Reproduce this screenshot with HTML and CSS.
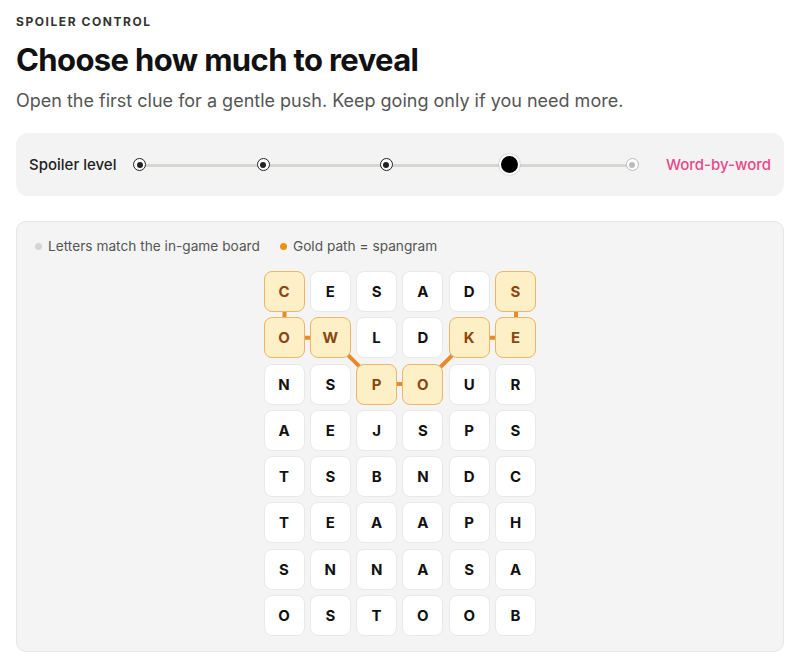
FILE: index.html
```html
<!DOCTYPE html>
<html lang="en">
<head>
  <meta charset="UTF-8">
  <meta name="viewport" content="width=device-width, initial-scale=1">
  <title>Spoiler Control</title>
  <link rel="stylesheet" href="styles.css">
</head>
<body>
  <div class="page">
    <div class="eyebrow">SPOILER CONTROL</div>
    <h1>Choose how much to reveal</h1>
    <p class="lead">Open the first clue for a gentle push. Keep going only if you need more.</p>

    <div class="level-panel">
      <span class="level-label">Spoiler level</span>
      <div class="slider">
        <span class="stop"></span>
        <span class="stop"></span>
        <span class="stop"></span>
        <span class="stop active"></span>
        <span class="stop muted"></span>
      </div>
      <span class="level-value">Word-by-word</span>
    </div>

    <div class="board-panel">
      <div class="legend">
        <span class="legend-item"><i class="dot grey"></i>Letters match the in-game board</span>
        <span class="legend-item"><i class="dot gold"></i>Gold path = spangram</span>
      </div>

      <div class="board">
        <svg class="path-lines" width="274" height="366" viewBox="0 0 274 366">
          <polyline points="20.5,20.5 20.5,66.8 66.8,66.8 113.1,113.1 159.4,113.1 205.7,66.8 252,66.8 252,20.5" />
        </svg>
        <div class="grid">
          <div class="cell gold">C</div><div class="cell">E</div><div class="cell">S</div><div class="cell">A</div><div class="cell">D</div><div class="cell gold">S</div>
          <div class="cell gold">O</div><div class="cell gold">W</div><div class="cell">L</div><div class="cell">D</div><div class="cell gold">K</div><div class="cell gold">E</div>
          <div class="cell">N</div><div class="cell">S</div><div class="cell gold">P</div><div class="cell gold">O</div><div class="cell">U</div><div class="cell">R</div>
          <div class="cell">A</div><div class="cell">E</div><div class="cell">J</div><div class="cell">S</div><div class="cell">P</div><div class="cell">S</div>
          <div class="cell">T</div><div class="cell">S</div><div class="cell">B</div><div class="cell">N</div><div class="cell">D</div><div class="cell">C</div>
          <div class="cell">T</div><div class="cell">E</div><div class="cell">A</div><div class="cell">A</div><div class="cell">P</div><div class="cell">H</div>
          <div class="cell">S</div><div class="cell">N</div><div class="cell">N</div><div class="cell">A</div><div class="cell">S</div><div class="cell">A</div>
          <div class="cell">O</div><div class="cell">S</div><div class="cell">T</div><div class="cell">O</div><div class="cell">O</div><div class="cell">B</div>
        </div>
      </div>
    </div>
  </div>
</body>
</html>
```

FILE: styles.css
```css
html, body {
  margin: 0;
  padding: 0;
  background: #fff;
  font-family: Inter, "Liberation Sans", sans-serif;
  color: #111;
}

.page {
  padding: 14px 16px 0;
}

.eyebrow {
  font-size: 12px;
  font-weight: 700;
  letter-spacing: 0.13em;
  color: #333;
  line-height: 15px;
}

h1 {
  margin: 12px 0 0;
  font-size: 31px;
  font-weight: 700;
  letter-spacing: -0.02em;
  line-height: 38px;
  color: #111;
}

.lead {
  margin: 11px 0 0;
  font-size: 18px;
  line-height: 22px;
  color: #555;
}

.level-panel {
  margin-top: 21px;
  height: 63px;
  display: flex;
  align-items: center;
  padding: 0 13px;
  background: #f3f3f3;
  border-radius: 12px;
}

.level-label {
  font-size: 15px;
  font-weight: 500;
  color: #222;
}

.slider {
  position: relative;
  flex: 1;
  margin: 0 27px 0 17px;
  display: flex;
  align-items: center;
  justify-content: space-between;
  height: 20px;
}

.slider::before {
  content: "";
  position: absolute;
  left: 6px;
  right: 6px;
  top: 9px;
  height: 3px;
  background: #d6d6d0;
  border-radius: 2px;
}

.stop {
  position: relative;
  width: 13px;
  height: 13px;
  box-sizing: border-box;
  border: 1.5px solid #222;
  border-radius: 50%;
  background: #fff;
  display: flex;
  align-items: center;
  justify-content: center;
}

.stop::after {
  content: "";
  width: 6px;
  height: 6px;
  border-radius: 50%;
  background: #222;
}

.stop.active {
  width: 21px;
  height: 21px;
  margin: 0 -4px;
  border: 2px solid #fff;
  background: #000;
  box-shadow: 0 0 2px rgba(0, 0, 0, 0.25);
}

.stop.active::after {
  display: none;
}

.stop.muted {
  border: 1px solid #bbb;
}

.stop.muted::after {
  background: #bbb;
}

.level-value {
  font-size: 15px;
  font-weight: 500;
  color: #e8488a;
}

.board-panel {
  margin-top: 25px;
  background: #f4f4f4;
  border: 1px solid #e6e6e6;
  border-radius: 10px;
  padding: 15px 18px 15px;
}

.legend {
  display: flex;
  gap: 20px;
  font-size: 13.7px;
  color: #555;
  line-height: 18px;
}

.legend-item {
  display: flex;
  align-items: center;
  gap: 6px;
}

.dot {
  width: 7px;
  height: 7px;
  border-radius: 50%;
}

.dot.grey {
  background: #d4d4d4;
}

.dot.gold {
  background: #f0920c;
}

.board {
  position: relative;
  width: 273px;
  margin: 16px auto 0;
}

.path-lines {
  position: absolute;
  left: 0;
  top: 0;
}

.path-lines polyline {
  fill: none;
  stroke: #e8892a;
  stroke-width: 4;
  stroke-linejoin: round;
}

.grid {
  position: relative;
  display: grid;
  grid-template-columns: repeat(6, 41px);
  grid-auto-rows: 41px;
  gap: 5.3px;
}

.cell {
  display: flex;
  align-items: center;
  justify-content: center;
  background: #fff;
  border: 1px solid #e9e9e9;
  border-radius: 8px;
  font-size: 15px;
  font-weight: 700;
  color: #111;
  box-sizing: border-box;
}

.cell.gold {
  background: #fdefc6;
  border-color: #f0b464;
  color: #8a4612;
}
```
